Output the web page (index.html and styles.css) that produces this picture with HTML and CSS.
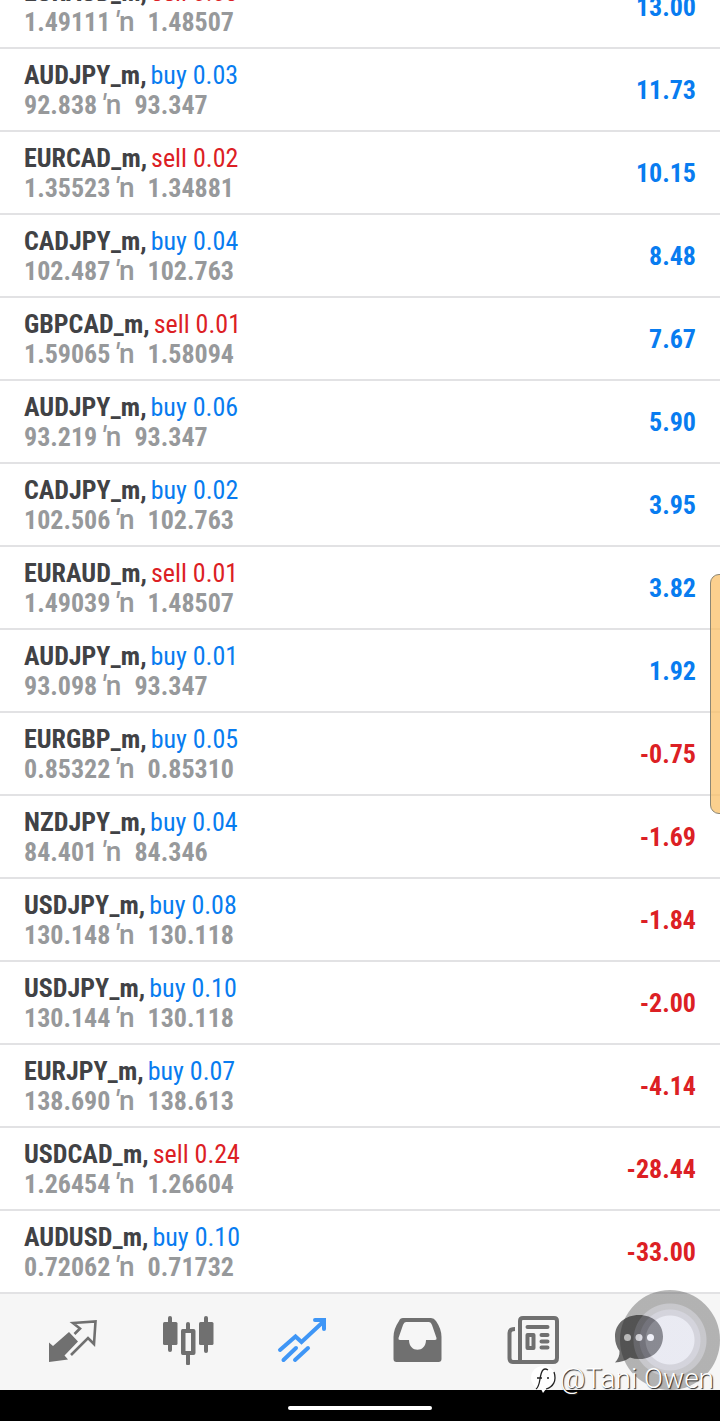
FILE: index.html
```html
<!DOCTYPE html>
<html lang="en">
<head>
<meta charset="utf-8">
<meta name="viewport" content="width=device-width, initial-scale=1">
<title>Trade positions</title>
<link rel="stylesheet" href="styles.css">
</head>
<body>
<div class="app">
  <main class="positions">
    <ul class="list" id="positions"></ul>
  </main>
  <nav class="tabs" aria-label="Main">
    <button class="tab" type="button" aria-label="Quotes">
      <svg class="icon" viewBox="0 0 52 52" fill="#707070"><path d="M22 15 31 24.500 17.500 38.500 21 42.500 2 45V25.500L6 29Z"/><path d="M27.500 17 33 11.500 26 6 48.500 4.500 47 27 41 21 24 38" fill="none" stroke="#707070" stroke-width="2.600"/></svg>
    </button>
    <button class="tab" type="button" aria-label="Charts">
      <svg class="icon" viewBox="0 0 52 52" fill="#707070"><rect x="1" y="5" width="14.500" height="23" rx="1.500"/><rect x="6" y="-1" width="4" height="36" rx="2"/><rect x="37" y="5" width="14.500" height="23" rx="1.500"/><rect x="42" y="-1" width="4" height="37" rx="2"/><path fill-rule="evenodd" d="M20.500 12H31.500Q33.500 12 33.500 14V36Q33.500 38 31.500 38H20.500Q19 38 19 36V14Q19 12 20.500 12ZM23.500 16V34H29V16Z"/><rect x="24" y="5" width="4" height="9" rx="2"/><rect x="24" y="36" width="4" height="12" rx="1"/></svg>
    </button>
    <button class="tab" type="button" aria-label="Trade" aria-current="page">
      <svg class="icon" viewBox="0 0 52 52" fill="none" stroke="#3f96f6" stroke-width="4"><path d="M3 33 18.500 19.500 24.500 25 46 5" stroke-linecap="round"/><path d="M38 3H47V12" stroke-linecap="round"/><path d="M6.500 43 19 31M18 43 31 31" stroke-linecap="round"/></svg>
    </button>
    <button class="tab" type="button" aria-label="History">
      <svg class="icon" viewBox="0 0 52 52" fill="#707070"><path fill-rule="evenodd" d="M11 1H39Q42 1 44 4Q49.500 12 49.500 20V42Q49.500 45 46.500 45H4.500Q1.500 45 1.500 42V20Q1.500 12 7 4Q8 1 11 1ZM14 5Q12 5 11 8L6.500 21Q6 23 8 23H17C17 36 34 36 34 23H43Q45 23 44.500 21L40 8Q39 5 37 5Z"/></svg>
    </button>
    <button class="tab" type="button" aria-label="News">
      <svg class="icon" viewBox="0 0 52 52" fill="none" stroke="#707070" stroke-width="4"><path d="M13 44V4Q13 1 16 1H47Q50 1 50 4V41Q50 45 46 45H6Q2.500 45 2.500 41V16Q2.500 12 8 12"/><path d="M20.500 10H40.500M34.500 18H40.500M34.500 24.500H40.500M34.500 30.500H40.500" stroke-linecap="round"/><rect x="20.500" y="18" width="6" height="13" stroke-linejoin="round"/></svg>
    </button>
    <button class="tab" type="button" aria-label="Messages">
      <svg class="icon" viewBox="8 3 52 52"><path fill="#6c6c6c" d="M25 1C39 1 49 10 49 22.500S39 45 26 45Q20 45 16 43.500Q10 48 1 48.500Q6 43 5.500 37Q1 31 1 22.500C1 10 11 1 25 1Z"/><g fill="#fff"><circle cx="13.500" cy="23.500" r="3.500"/><circle cx="25" cy="23.500" r="3.500"/><circle cx="36.500" cy="23.500" r="3.500"/></g></svg>
    </button>
  </nav>
  <div class="system"><span class="home"></span></div>
  <div class="edge-handle"></div>
  <div class="touch"></div>
  <div class="credit">
    <svg class="credit-logo" viewBox="0 0 28 28"><path fill="#fff" d="M13 1C20 1 25 5 25 12C25 19 21 24 16 24L13 28L11 24C5 23 1 19 1 13C1 6 6 1 13 1Z"/><path d="M6 24C11 21 9 9 13 5Q15 3 18 5M7 13H12M17 13H19M24 7C27 16 23 22 16 24" fill="none" stroke="#222" stroke-width="1.300"/></svg>
    <span>@Tani Owen</span>
  </div>
</div>
<script src="app.js"></script>
</body>
</html>
```
FILE: styles.css
```css
* { box-sizing: border-box; }
body {
  margin: 0;
  background: #fff;
  font-family: "Roboto Condensed", "Liberation Sans Narrow", Roboto, sans-serif;
}
.app {
  position: relative;
  display: flex;
  flex-direction: column;
  height: 100vh;
  overflow: hidden;
}
.positions {
  flex: 1;
  min-height: 0;
  display: flex;
  flex-direction: column;
  justify-content: flex-end;
  overflow: hidden;
}
.list { margin: 0; padding: 0; list-style: none; }
.row {
  display: flex;
  align-items: center;
  justify-content: space-between;
  padding: 11px 24px 10px;
  border-bottom: 2px solid #e2e2e4;
  font-size: 26px;
  line-height: 30px;
  font-weight: 700;
  white-space: nowrap;
}
.deal { display: flex; gap: 4px; }
.symbol { color: #414245; }
.order { font-weight: 400; }
.buy, .gain { color: #087cf0; }
.sell, .loss { color: #dc2024; }
.prices { display: flex; color: #97999b; }
.arrow {
  margin: 0 13px 0 4px;
  font-family: Roboto, sans-serif;
  font-size: 28px;
  font-weight: 500;
}
.tick { font-style: italic; }
.tabs {
  display: grid;
  grid-template-columns: repeat(6, 1fr);
  padding: 0 15px;
  height: 96px;
  background: #f6f6f6;
}
.tab {
  display: flex;
  justify-content: center;
  padding: 23px 0 0;
  border: 0;
  background: none;
}
.icon { width: 52px; height: 52px; overflow: visible; flex: none; }
.system {
  display: flex;
  justify-content: center;
  padding-top: 16px;
  height: 31px;
  background: #000;
}
.home { width: 144px; height: 4px; border-radius: 2px; background: #fff; }
.edge-handle {
  position: absolute;
  right: -10px;
  top: 574px;
  width: 20px;
  height: 240px;
  border: 1px solid #8c8775;
  border-radius: 9px;
  background: rgba(250, 192, 104, 0.75);
}
.touch {
  position: absolute;
  right: 0;
  bottom: 31px;
  width: 100px;
  height: 100px;
  border-radius: 50%;
  background: radial-gradient(
    circle,
    rgba(205, 208, 235, 0.3) 24px,
    rgba(133, 133, 160, 0.3) 25px 30px,
    rgba(93, 93, 107, 0.3) 31px 36px,
    rgba(27, 27, 27, 0.31) 37px
  );
}
.credit {
  position: absolute;
  right: 6px;
  bottom: 27px;
  display: flex;
  align-items: center;
  gap: 2px;
  color: #fff;
  font-family: Roboto, "Noto Sans", sans-serif;
  font-size: 28px;
  font-weight: 300;
  line-height: 30px;
  text-shadow: 1px 1px 1px #222;
}
.credit-logo { width: 28px; height: 28px; }
```
FILE: app.js
```js
const positions = [
  ["EURAUD_m", "sell", "0.03", "1.49111", "1.48507", "13.00"],
  ["AUDJPY_m", "buy", "0.03", "92.838", "93.347", "11.73"],
  ["EURCAD_m", "sell", "0.02", "1.35523", "1.34881", "10.15"],
  ["CADJPY_m", "buy", "0.04", "102.487", "102.763", "8.48"],
  ["GBPCAD_m", "sell", "0.01", "1.59065", "1.58094", "7.67"],
  ["AUDJPY_m", "buy", "0.06", "93.219", "93.347", "5.90"],
  ["CADJPY_m", "buy", "0.02", "102.506", "102.763", "3.95"],
  ["EURAUD_m", "sell", "0.01", "1.49039", "1.48507", "3.82"],
  ["AUDJPY_m", "buy", "0.01", "93.098", "93.347", "1.92"],
  ["EURGBP_m", "buy", "0.05", "0.85322", "0.85310", "-0.75"],
  ["NZDJPY_m", "buy", "0.04", "84.401", "84.346", "-1.69"],
  ["USDJPY_m", "buy", "0.08", "130.148", "130.118", "-1.84"],
  ["USDJPY_m", "buy", "0.10", "130.144", "130.118", "-2.00"],
  ["EURJPY_m", "buy", "0.07", "138.690", "138.613", "-4.14"],
  ["USDCAD_m", "sell", "0.24", "1.26454", "1.26604", "-28.44"],
  ["AUDUSD_m", "buy", "0.10", "0.72062", "0.71732", "-33.00"]
];

document.getElementById("positions").innerHTML = positions.map(
  ([symbol, side, volume, open, current, profit]) => `
  <li class="row">
    <div>
      <div class="deal"><span class="symbol">${symbol},</span><span class="order ${side}">${side} ${volume}</span></div>
      <div class="prices"><span>${open}</span><span class="arrow"><span class="tick">′</span>n</span><span>${current}</span></div>
    </div>
    <span class="${profit.startsWith("-") ? "loss" : "gain"}">${profit}</span>
  </li>`).join("");
```
